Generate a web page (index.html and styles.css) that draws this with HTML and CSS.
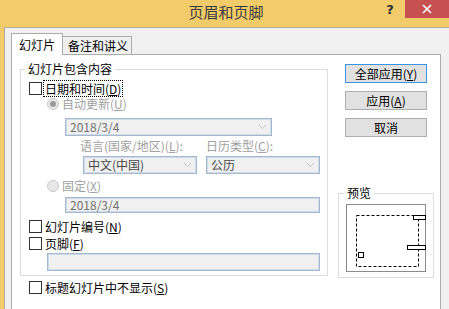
FILE: index.html
```html
<!DOCTYPE html>
<html lang="zh-CN">
<head>
    <meta charset="UTF-8">
    <title>页眉和页脚</title>
    <link rel="stylesheet" href="styles.css">
</head>
<body>
<div class="dialog">
    <div class="titlebar">
        <span class="title">页眉和页脚</span>
        <div class="controls">
            <span class="help">?</span>
            <span class="close">
                <svg width="10" height="10" viewBox="0 0 10 10"><path d="M1 1 L9 9 M9 1 L1 9" stroke="#fff" stroke-width="1.6"/></svg>
            </span>
        </div>
    </div>
    <div class="client">
        <div class="tabs">
            <div class="tab active">幻灯片</div>
            <div class="tab">备注和讲义</div>
        </div>
        <div class="panel">
            <div class="left-col">
                <fieldset class="group">
                    <legend>幻灯片包含内容</legend>
                    <div class="row ind-check">
                        <span class="checkbox"></span>
                        <span class="focus">日期和时间(<u>D</u>)</span>
                    </div>
                    <div class="row ind-radio disabled">
                        <span class="radio on"></span>自动更新(<u>U</u>)
                    </div>
                    <div class="field combo date-combo">
                        <span>2018/3/4</span>
                        <span class="arrow"><svg width="9" height="6" viewBox="0 0 9 6"><path d="M1 1 L4.5 4.5 L8 1" stroke="#c4c4c4" fill="none"/></svg></span>
                    </div>
                    <div class="labels disabled">
                        <span>语言(国家/地区)(<u>L</u>):</span>
                        <span>日历类型(<u>C</u>):</span>
                    </div>
                    <div class="combos">
                        <div class="field combo dark">
                            <span>中文(中国)</span>
                            <span class="arrow"><svg width="9" height="6" viewBox="0 0 9 6"><path d="M1 1 L4.5 4.5 L8 1" stroke="#c4c4c4" fill="none"/></svg></span>
                        </div>
                        <div class="field combo dark">
                            <span>公历</span>
                            <span class="arrow"><svg width="9" height="6" viewBox="0 0 9 6"><path d="M1 1 L4.5 4.5 L8 1" stroke="#c4c4c4" fill="none"/></svg></span>
                        </div>
                    </div>
                    <div class="row ind-radio fixed-row disabled">
                        <span class="radio"></span>固定(<u>X</u>)
                    </div>
                    <div class="field fixed-box">2018/3/4</div>
                    <div class="row ind-check num-row">
                        <span class="checkbox"></span>幻灯片编号(<u>N</u>)
                    </div>
                    <div class="row ind-check foot-row">
                        <span class="checkbox"></span>页脚(<u>F</u>)
                    </div>
                    <div class="field foot-box"></div>
                </fieldset>
                <div class="row title-row">
                    <span class="checkbox"></span>标题幻灯片中不显示(<u>S</u>)
                </div>
            </div>
            <div class="right-col">
                <div class="btn default">全部应用(<u>Y</u>)</div>
                <div class="btn">应用(<u>A</u>)</div>
                <div class="btn">取消</div>
                <fieldset class="group preview">
                    <legend>预览</legend>
                    <svg class="preview-box" width="80" height="68" viewBox="0 0 80 68">
                        <rect x="0.5" y="0.5" width="79" height="67" fill="#fff" stroke="#8a8a8c"/>
                        <rect x="10.5" y="11.5" width="62" height="51" fill="none" stroke="#000" stroke-dasharray="3 2"/>
                        <rect x="67.5" y="11.5" width="12" height="4" fill="#fff" stroke="#000"/>
                        <rect x="61.5" y="41.5" width="18" height="4" fill="#fff" stroke="#000"/>
                        <rect x="12.5" y="48.5" width="5" height="5" fill="#fff" stroke="#000"/>
                    </svg>
                </fieldset>
            </div>
        </div>
    </div>
</div>
</body>
</html>
```

FILE: styles.css
```css
* { box-sizing: border-box; }
body {
    margin: 0;
    font-family: "Noto Sans CJK SC", "Noto Sans", sans-serif;
    font-size: 12px;
    color: #000;
}
.dialog {
    width: 449px;
    height: 309px;
    overflow: hidden;
    background: #f2cc6b;
    display: flex;
    flex-direction: column;
}
.titlebar {
    height: 27px;
    flex-shrink: 0;
    display: grid;
    grid-template-columns: 1fr auto 1fr;
}
.title {
    grid-column: 2;
    font-size: 15px;
    line-height: 24px;
    color: #3a3a3a;
    padding-left: 3px;
}
.controls {
    grid-column: 3;
    display: flex;
    justify-content: flex-end;
    align-items: flex-start;
}
.help {
    width: 30px;
    text-align: center;
    font-family: "DejaVu Sans", sans-serif;
    font-weight: bold;
    font-size: 13px;
    line-height: 19px;
    color: #2c2c2c;
}
.close {
    width: 44px;
    height: 18px;
    background: #c75050;
    display: flex;
    align-items: center;
    justify-content: center;
}
.client {
    flex: 1;
    margin-left: 4px;
    border-left: 1px solid #b8ae96;
    border-top: 1px solid #b8ae96;
    background: #f0f0f0;
    padding: 5px 0 0 6px;
}

/* tabs */
.tabs {
    display: flex;
    align-items: flex-end;
    height: 21px;
}
.tab {
    border: 1px solid #acacac;
    border-bottom: none;
    line-height: 16px;
}
.tab.active {
    width: 52px;
    height: 22px;
    margin-bottom: -1px;
    padding: 3px 0 0 7px;
    background: #fff;
    position: relative;
    z-index: 1;
}
.tab:not(.active) {
    width: 69px;
    height: 18px;
    border-left: none;
    padding: 1px 0 0 5px;
    background: #f0f0f0;
}
.panel {
    width: 430px;
    height: 270px;
    border: 1px solid #acacac;
    background: #fff;
    display: flex;
    padding: 0 0 0 8px;
}

/* group boxes */
.group {
    margin: 0;
    padding: 0 0 4px;
    border: 1px solid #dcdcdc;
    min-width: 0;
}
.group legend {
    margin-left: 4px;
    padding: 0 3px;
    line-height: 14px;
}
.left-col {
    width: 308px;
    padding-top: 7px;
    display: flex;
    flex-direction: column;
}
.right-col {
    width: 96px;
    margin-left: 10px;
    display: flex;
    flex-direction: column;
}

.row {
    display: flex;
    align-items: center;
    height: 15px;
    line-height: 14px;
    white-space: nowrap;
}
.disabled { color: #a0a0a0; }
.ind-check { margin-left: 8px; }
.ind-check:first-of-type { margin-top: 5px; }
.ind-radio { margin-left: 26px; }
.checkbox {
    width: 13px;
    height: 13px;
    border: 1px solid #333;
    background: #fff;
    margin-right: 3px;
    flex-shrink: 0;
}
.focus {
    display: inline-block;
    height: 15px;
    line-height: 15px;
    outline: 1px dotted #000;
    outline-offset: 0;
    padding: 0 1px;
    margin-left: -1px;
}
.radio {
    width: 12px;
    height: 12px;
    border-radius: 50%;
    border: 1px solid #c8c8c8;
    background: #e8e8e8;
    margin-right: 3px;
    display: flex;
    align-items: center;
    justify-content: center;
    flex-shrink: 0;
}
.radio.on::after {
    content: "";
    width: 6px;
    height: 6px;
    border-radius: 50%;
    background: #9a9a9a;
}

.field {
    height: 18px;
    border: 1px solid #a7b8ca;
    box-shadow: inset 0 0 0 1px #cadcee;
    background: #f0f0f0;
    display: flex;
    align-items: center;
    padding-left: 4px;
    color: #707070;
    line-height: 14px;
    white-space: nowrap;
}
.combo .arrow {
    margin-left: auto;
    width: 17px;
    height: 100%;
    display: flex;
    align-items: center;
    justify-content: center;
}
.combo.dark { color: #474747; }
.date-combo {
    margin: 7px 0 0 44px;
    width: 207px;
}
.labels {
    margin: 3px 0 0 59px;
    height: 14px;
    line-height: 14px;
    display: grid;
    grid-template-columns: 126px auto;
    white-space: nowrap;
}
.combos {
    margin: 3px 0 0 62px;
    display: flex;
    gap: 9px;
}
.combos .field { width: 114px; }
.fixed-row { margin-top: 4px; }
.fixed-box {
    margin: 4px 0 0 44px;
    width: 255px;
    height: 16px;
}
.num-row { margin-top: 6px; }
.foot-row { margin-top: 2px; }
.foot-box {
    margin: 2px 0 0 26px;
    width: 273px;
}
.title-row {
    margin: 4px 0 0 9px;
}

/* buttons */
.btn {
    width: 82px;
    height: 19px;
    margin-left: 7px;
    margin-top: 8px;
    border: 1px solid #adadad;
    background: #e1e1e1;
    text-align: center;
    line-height: 17px;
    white-space: nowrap;
}
.btn.default {
    margin-top: 9px;
    border-color: #3c93e6;
}
.preview {
    margin-top: 49px;
    width: 96px;
    padding-bottom: 5px;
}
.preview legend { margin-left: 5px; }
.preview-box {
    display: block;
    margin: 4px 0 0 7px;
}
```
